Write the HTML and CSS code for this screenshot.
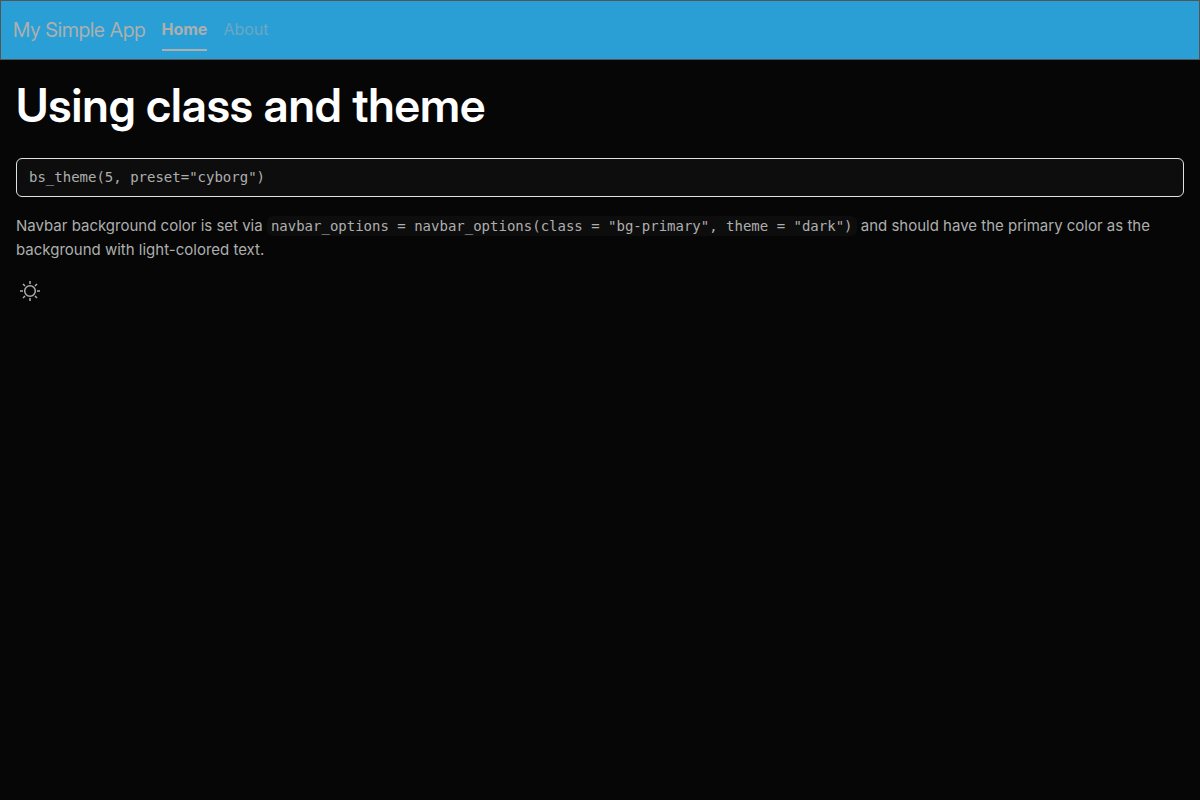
FILE: index.html
```html
<!DOCTYPE html>
<html lang="en">
<head>
<meta charset="utf-8">
<title>My Simple App</title>
<link rel="stylesheet" href="styles.css">
</head>
<body>
<nav class="navbar">
  <a class="brand" href="#">My Simple App</a>
  <div class="nav-links">
    <a class="nav-link active" href="#home" aria-current="page">Home</a>
    <a class="nav-link" href="#about">About</a>
  </div>
</nav>
<main class="content">
  <h1 class="title">Using class and theme</h1>
  <pre class="code-block">bs_theme(5, preset="cyborg")</pre>
  <p class="text">Navbar background color is set via <code class="code">navbar_options = navbar_options(class = "bg-primary", theme = "dark")</code> and should have the primary color as the background with light-colored text.</p>
  <button class="mode-toggle" type="button" aria-label="Toggle color mode">
    <svg class="sun" viewBox="0 0 20 20" fill="none" stroke="currentColor" stroke-width="1.5">
      <circle cx="10" cy="10" r="5.3"/>
      <path d="M10 0v3M10 17v3M0 10h3M17 10h3M3 3l2 2M15 15l2 2M17 3l-2 2M5 15l-2 2"/>
    </svg>
  </button>
</main>
</body>
</html>
```
FILE: styles.css
```css
* { box-sizing: border-box; }
body {
  margin: 0;
  background: #060606;
  color: #adafae;
  font: 16px/24px Inter, sans-serif;
}
.navbar {
  display: flex;
  align-items: center;
  gap: 16px;
  min-height: 60px;
  padding: 0 12px;
  background: #2a9fd6;
  border: 1px solid #555;
}
.brand {
  color: #adafae;
  font: 20px/30px "Inter Display", Inter, sans-serif;
  text-decoration: none;
}
.nav-links { display: flex; gap: 16px; }
.nav-link {
  padding: 8px 0;
  color: #6ca7c2;
  border-bottom: 2px solid transparent;
  text-decoration: none;
}
.active { color: #adafae; font-weight: 700; border-color: #adafae; }
.content { padding: 16px; }
.title {
  margin: 0 0 24px;
  color: #fff;
  font: 600 46px/58px "Inter Display", Inter, sans-serif;
}
.code-block {
  margin: 0 0 17px;
  padding: 8px 12px;
  border: 1px solid #dee2e6;
  border-radius: 6px;
  background: #0d0d0d;
  font: 14px/21px "DejaVu Sans Mono", monospace;
}
.text { margin: 0 0 15px; font-size: 15px; }
.code { padding: 2px 4px; border-radius: 6px; background: #0d0d0d; font: 14px "DejaVu Sans Mono", monospace; }
.mode-toggle { display: flex; margin: 0; padding: 4px; border: 0; background: none; color: #adafae; }
.sun { width: 20px; height: 20px; }
```
